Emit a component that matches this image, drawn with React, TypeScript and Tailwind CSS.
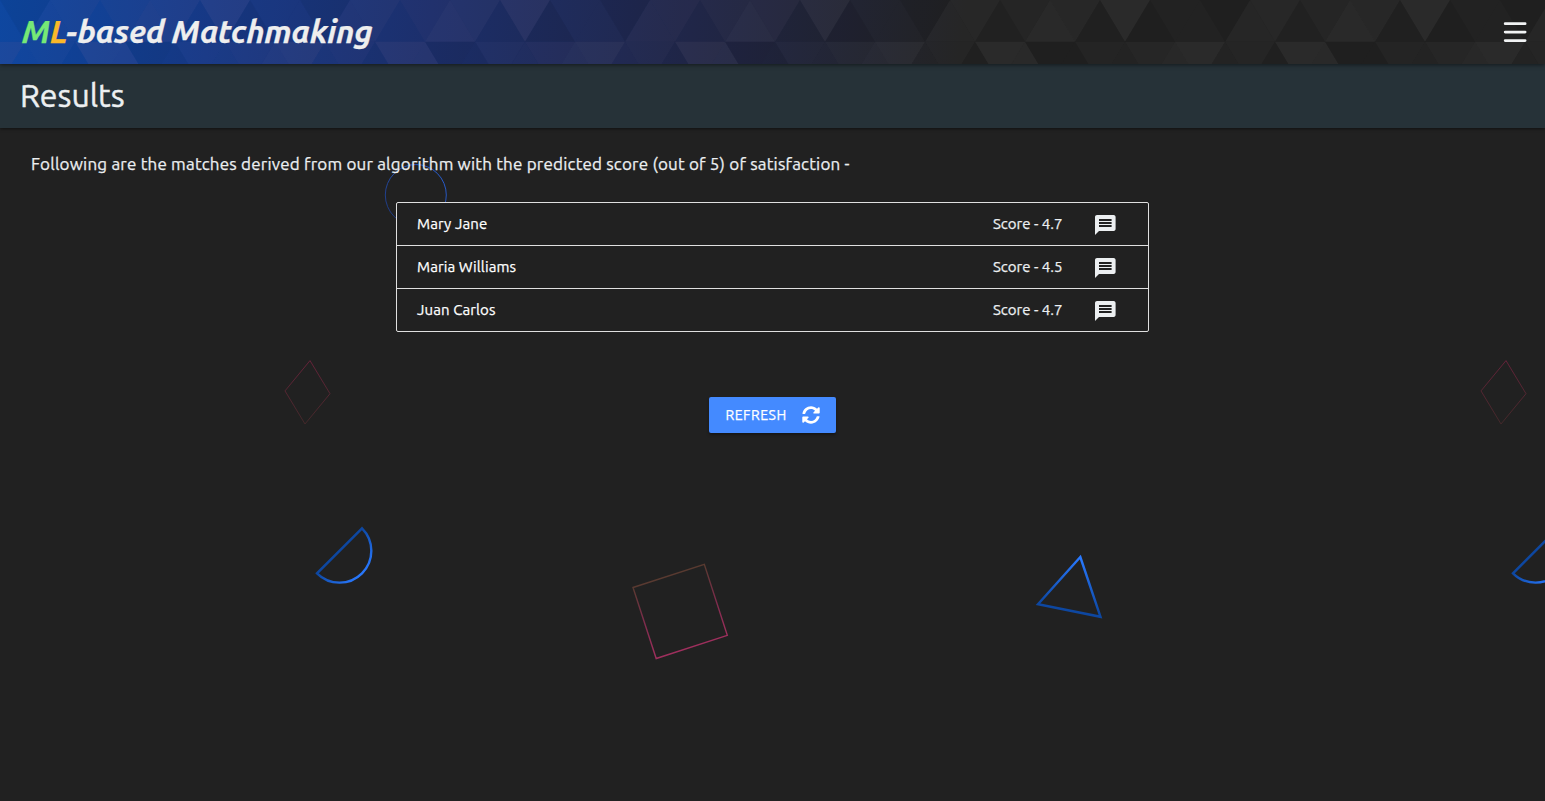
import { FaSyncAlt } from "react-icons/fa";

// Facets of the header pattern, one 300px wide tile. Positive shades lighten, negative ones darken.
type Facet = { at: number; shade: number };

const topUp: Facet[] = [
  { at: 0, shade: 0.006 },
  { at: 50, shade: 0.024 },
  { at: 100, shade: 0.004 },
  { at: 150, shade: 0.038 },
  { at: 200, shade: -0.02 },
  { at: 250, shade: -0.06 },
];
const topDown: Facet[] = [
  { at: 25, shade: -0.05 },
  { at: 75, shade: 0.026 },
  { at: 125, shade: 0.02 },
  { at: 175, shade: 0.03 },
  { at: 225, shade: 0.042 },
  { at: 275, shade: 0.006 },
];
const lowUp: Facet[] = [
  { at: 25, shade: 0.01 },
  { at: 75, shade: -0.02 },
  { at: 125, shade: 0.038 },
  { at: 175, shade: -0.04 },
  { at: 225, shade: 0.012 },
  { at: 275, shade: 0.034 },
];
const lowDown: Facet[] = [
  { at: 0, shade: 0.042 },
  { at: 50, shade: 0.018 },
  { at: 100, shade: 0.042 },
  { at: 150, shade: -0.06 },
  { at: 200, shade: 0.016 },
  { at: 250, shade: 0.022 },
];

const up = (x: number, y: number) => `${x},${y} ${x + 25},${y + 41.7} ${x - 25},${y + 41.7}`;
const down = (x: number, y: number) => `${x - 25},${y} ${x + 25},${y} ${x},${y + 41.7}`;

function tint(x: number, shade: number) {
  if (shade < 0) return { fill: "#000", fillOpacity: -shade };
  const t = Math.min(1, Math.max(0, 1 - x / 950));
  const g = Math.round(255 - t * 130);
  return { fill: `rgb(255,${g},${g})`, fillOpacity: shade * (1 + t * 0.4) };
}

const tiles = [0, 300, 600, 900, 1200, 1500];
const layers = [
  { facets: topUp, shape: up, y: 0 },
  { facets: topDown, shape: down, y: 0 },
  { facets: lowUp, shape: up, y: 41.7 },
  { facets: lowDown, shape: down, y: 41.7 },
];

function HeaderPattern() {
  return (
    <svg className="absolute inset-0 h-full w-full" aria-hidden="true">
      {layers.map((layer, i) =>
        tiles.map((start) =>
          layer.facets.map((f) => (
            <polygon
              key={`${i}-${start + f.at}`}
              points={layer.shape(start + f.at, layer.y)}
              {...tint(start + f.at, f.shade)}
            />
          )),
        ),
      )}
    </svg>
  );
}

function Shapes() {
  return (
    <svg className="absolute inset-0 h-full w-full" fill="none" aria-hidden="true">
      <defs>
        <linearGradient id="ring" x1="1" y1="0" x2="0" y2="1">
          <stop offset="0" stopColor="#2962d9" />
          <stop offset="1" stopColor="#1d3474" />
        </linearGradient>
        <linearGradient id="rhomb" x1="0" y1="0" x2="0" y2="1">
          <stop offset="0" stopColor="#76233f" />
          <stop offset="1" stopColor="#4b2a2c" />
        </linearGradient>
        <linearGradient id="half" x1="0.42" y1="0.42" x2="0.85" y2="0.85">
          <stop offset="0" stopColor="#0d47a1" />
          <stop offset="1" stopColor="#2979ff" />
        </linearGradient>
        <linearGradient id="square" x1="0.35" y1="0" x2="0.65" y2="1">
          <stop offset="0.12" stopColor="#593a30" />
          <stop offset="0.5" stopColor="#7e2c4c" />
          <stop offset="0.95" stopColor="#a52f60" />
        </linearGradient>
        <linearGradient id="tri" x1="0.6" y1="0" x2="0.4" y2="1">
          <stop offset="0" stopColor="#2979ff" />
          <stop offset="0.85" stopColor="#0d47a1" />
        </linearGradient>
        <g id="pair">
          <path d="M310 360.6L330 393.7L305 424L285 390.9Z" stroke="url(#rhomb)" strokeWidth="0.8" />
          <path d="M362 528.3L317 573.3A31.8 31.8 0 0 0 362 528.3Z" stroke="url(#half)" strokeWidth="2.4" />
        </g>
      </defs>
      <circle cx="415.8" cy="195" r="30.5" stroke="url(#ring)" strokeWidth="1" />
      <use href="#pair" />
      <use href="#pair" x="1196" />
      <path d="M633 587.5L704.3 564.3L727.3 635.3L656.2 658.5Z" stroke="url(#square)" strokeWidth="1.4" />
      <path d="M1080.3 557L1100.5 616.8L1038 604.3Z" stroke="url(#tri)" strokeWidth="2.4" />
    </svg>
  );
}

const matches = [
  { name: "Mary Jane", score: "4.7" },
  { name: "Maria Williams", score: "4.5" },
  { name: "Juan Carlos", score: "4.7" },
];

export default function App() {
  return (
    <div className="relative isolate min-h-screen overflow-hidden bg-[#212121] font-['Ubuntu','Noto_Sans',sans-serif] text-[#eceff1] [-webkit-text-stroke:0.25px_currentColor]">
      <div className="absolute inset-0 -z-10">
        <Shapes />
      </div>

      <header className="relative z-20 flex h-16 items-center justify-between bg-[linear-gradient(97deg,#0d47a1_0px,#173a88_210px,#1c2f6c_430px,#202648_690px,#212121_960px)] pr-[18px] pl-[22px] shadow-[0_1px_4px_rgba(0,0,0,0.5)]">
        <HeaderPattern />
        <h1 className="relative pb-0.5 text-[32px] leading-none font-bold tracking-[-0.23px] whitespace-nowrap text-[#eeeeee] italic">
          <span className="text-[#76e876]">M</span>
          <span className="text-[#fbb829]">L</span>-based Matchmaking
        </h1>
        <button aria-label="Menu" className="relative">
          <svg width="24" height="24" viewBox="0 0 24 24" fill="none" stroke="#f1f3f4" strokeWidth="2.8" strokeLinecap="round">
            <path d="M2.2 3.7H22.1M2.2 12.1H22.1M2.2 20.6H22.1" />
          </svg>
        </button>
      </header>

      <div className="relative z-10 flex h-16 items-center bg-[#263238] pb-0.5 pl-5 shadow-[0_1px_3px_rgba(0,0,0,0.5)]">
        <h2 className="text-[32px] leading-none [-webkit-text-stroke:0.45px_currentColor]">Results</h2>
      </div>

      <main className="flex flex-col items-center">
        <p className="mt-6 self-start pl-[31px] text-[17px] leading-6 tracking-[0.2px] whitespace-nowrap">
          Following are the matches derived from our algorithm with the predicted score (out of 5) of satisfaction -
        </p>
        <ul className="mt-[26px] w-[753px] divide-y divide-[#e0e0e0] rounded-[2px] border border-[#e0e0e0] bg-[#212121]">
          {matches.map((m, i) => (
            <li key={i} className="flex h-[43px] items-center pl-5 text-[15px] last:h-[42px]">
              <span className="flex-1 tracking-[0.1px] text-white">{m.name}</span>
              <span className="w-[100px]">Score - {m.score}</span>
              <svg className="mt-0.5 mr-[31px]" width="24" height="24" viewBox="0 0 24 24" fill="#eceff1">
                <path d="M20.6 2H4c-1.1 0-1.99.9-1.99 2L2 22l4-4h14.6c1.1 0 2-.9 2-2V4c0-1.1-.9-2-2-2zm-2 12H6v-2h12.6v2zm0-3H6V9h12.6v2zm0-3H6V6h12.6v2z" />
              </svg>
            </li>
          ))}
        </ul>
        <button className="mt-[65px] flex h-9 w-[127px] items-center justify-between rounded-[2px] bg-[#448aff] pr-4 pl-[16.5px] text-[14px] tracking-[0.5px] text-white shadow-[0_2px_3px_rgba(0,0,0,0.35)]">
          REFRESH
          <FaSyncAlt className="size-[18px]" />
        </button>
      </main>
    </div>
  );
}
